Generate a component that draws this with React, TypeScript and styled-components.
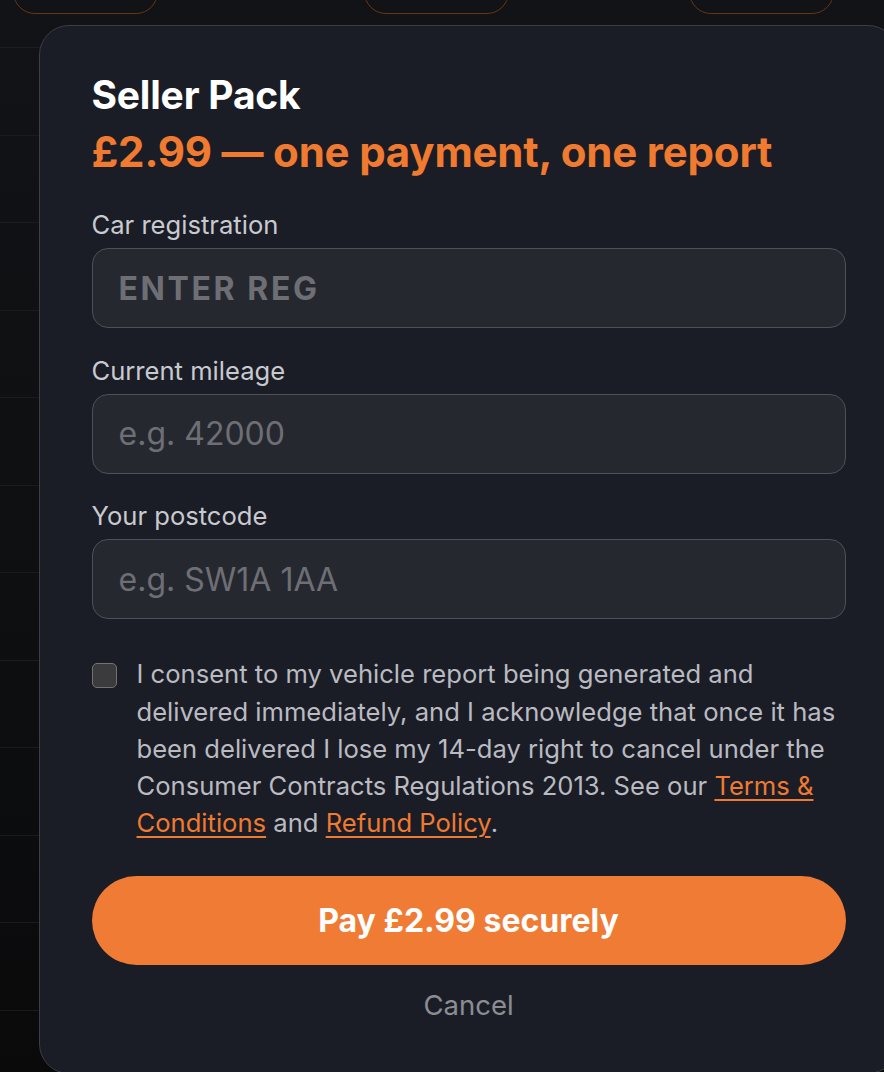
import styled, { createGlobalStyle } from "styled-components";

const GlobalStyle = createGlobalStyle`
    html, body {
        margin: 0;
        padding: 0;
        height: 100%;
        overflow: hidden;
    }
    body {
        background: linear-gradient(180deg, #121316 0%, #0e0f11 55%, #0a0a0b 100%);
        font-family: Inter, "Noto Sans", "Liberation Sans", sans-serif;
        -webkit-font-smoothing: antialiased;
    }
    * {
        box-sizing: border-box;
    }
`

const Page = styled.div`
    width: 884px;
    height: 1072px;
    overflow: hidden;
`

const Toolbar = styled.div`
    display: flex;
    align-items: flex-end;
    height: 14px;
    overflow: hidden;
    padding-left: 13px;
`

const GhostPill = styled.div<{ $gap: number }>`
    flex: none;
    width: 145px;
    height: 48px;
    margin-left: ${(p) => p.$gap}px;
    border: 1.5px solid #6a3515;
    border-radius: 22px;
`

const Table = styled.div`
    margin-top: 33px;
    border-top: 1px solid #1c1d20;
`

const Row = styled.div`
    height: 87.5px;
    border-bottom: 1px solid #1a1b1e;
`

const Dialog = styled.div`
    position: fixed;
    left: 39px;
    top: 25px;
    width: 859px;
    height: 1049px;
    padding: 45px 51.5px 0 51.5px;
    background: #1b1d26;
    border: 1.5px solid #3b3e48;
    border-radius: 30px;
    display: flex;
    flex-direction: column;
`

const Title = styled.h2`
    margin: 0;
    font-size: 39px;
    line-height: 47px;
    font-weight: 700;
    color: #ffffff;
    letter-spacing: -0.2px;
`

const Price = styled.p`
    margin: 9px 0 0 0;
    font-size: 42px;
    line-height: 50px;
    font-weight: 700;
    color: #ef7a30;
    letter-spacing: -0.2px;
`

const Form = styled.form`
    display: flex;
    flex-direction: column;
    gap: 24.7px;
    margin-top: 30.3px;
`

const Field = styled.label`
    display: flex;
    flex-direction: column;
    gap: 4.8px;
`

const Label = styled.span`
    font-size: 25.6px;
    line-height: 36px;
    color: #c9cacf;
`

const Input = styled.input<{ $reg?: boolean }>`
    width: 100%;
    height: 80px;
    padding: 0 26px;
    background: #262830;
    border: 1.5px solid #4d5059;
    border-radius: 16px;
    color: #ffffff;
    font-family: Inter, "Noto Sans", "Liberation Sans", sans-serif;
    font-size: 32px;
    font-weight: ${(p) => (p.$reg ? 700 : 400)};
    letter-spacing: ${(p) => (p.$reg ? "2.6px" : "0")};
    text-transform: ${(p) => (p.$reg ? "uppercase" : "none")};
    outline: none;

    &::placeholder {
        color: #6e6f75;
    }
`

const Consent = styled.label`
    display: flex;
    align-items: flex-start;
    gap: 20px;
    margin-top: 11.5px;
`

const Checkbox = styled.input`
    appearance: none;
    flex: none;
    width: 25px;
    height: 25px;
    margin: 7.5px 0 0 0;
    background: #3b3b3e;
    border: 1.5px solid #737376;
    border-radius: 5px;
`

const ConsentText = styled.span`
    font-size: 25.6px;
    line-height: 37.3px;
    color: #babbc1;
`

const Link = styled.a`
    color: #ef7a30;
    text-decoration: underline;
    text-underline-offset: 4px;
    text-decoration-thickness: 1.5px;
`

const PayButton = styled.button`
    margin-top: 34px;
    height: 89px;
    width: 100%;
    flex: none;
    border: none;
    border-radius: 45px;
    background: #ef7b34;
    color: #ffffff;
    font-family: Inter, "Noto Sans", "Liberation Sans", sans-serif;
    font-size: 32px;
    font-weight: 700;
    cursor: pointer;
`

const CancelButton = styled.button`
    align-self: center;
    margin-top: 20.5px;
    background: none;
    border: none;
    padding: 0;
    color: #8c8d93;
    font-family: Inter, "Noto Sans", "Liberation Sans", sans-serif;
    font-size: 27.5px;
    line-height: 40px;
    cursor: pointer;
`

const rows = Array.from({ length: 12 }, (_, i) => i)

export default function App() {
    return (
        <>
            <GlobalStyle />
            <Page>
                <Toolbar>
                    <GhostPill $gap={0} />
                    <GhostPill $gap={206} />
                    <GhostPill $gap={180} />
                </Toolbar>
                <Table>
                    {rows.map((r) => (
                        <Row key={r} />
                    ))}
                </Table>
            </Page>
            <Dialog role="dialog">
                <Title>Seller Pack</Title>
                <Price>£2.99 — one payment, one report</Price>
                <Form onSubmit={(e) => e.preventDefault()}>
                    <Field>
                        <Label>Car registration</Label>
                        <Input $reg placeholder="ENTER REG" />
                    </Field>
                    <Field>
                        <Label>Current mileage</Label>
                        <Input placeholder="e.g. 42000" />
                    </Field>
                    <Field>
                        <Label>Your postcode</Label>
                        <Input placeholder="e.g. SW1A 1AA" />
                    </Field>
                    <Consent>
                        <Checkbox type="checkbox" />
                        <ConsentText>
                            I consent to my vehicle report being generated and delivered immediately, and I
                            acknowledge that once it has been delivered I lose my 14-day right to cancel under
                            the Consumer Contracts Regulations 2013. See our <Link href="#">Terms &amp; Conditions</Link> and{" "}
                            <Link href="#">Refund Policy</Link>.
                        </ConsentText>
                    </Consent>
                </Form>
                <PayButton type="button">Pay £2.99 securely</PayButton>
                <CancelButton type="button">Cancel</CancelButton>
            </Dialog>
        </>
    )
}
